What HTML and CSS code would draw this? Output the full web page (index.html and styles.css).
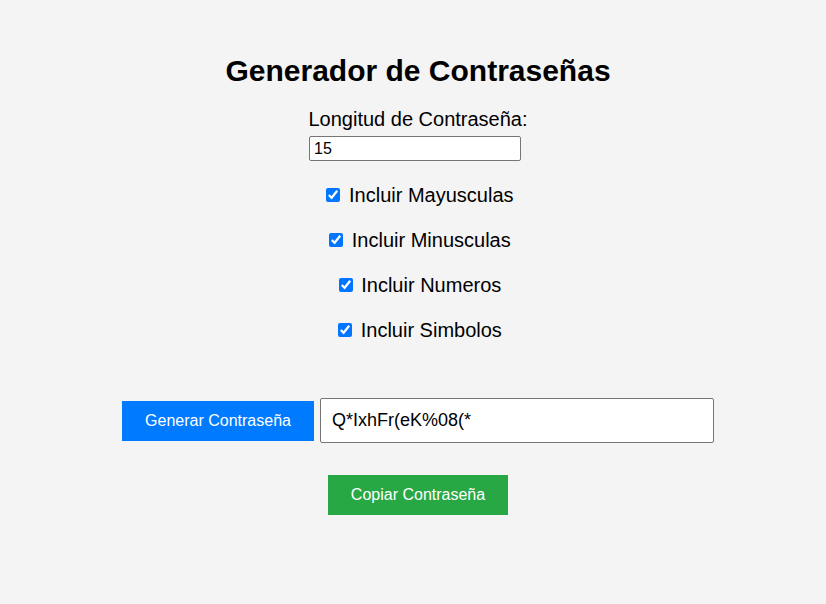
FILE: index.html
```html
<!DOCTYPE html>
<html lang="es">
<head>
<meta charset="utf-8">
<title>Generador de Contraseñas</title>
<link rel="stylesheet" href="styles.css">
</head>
<body>
<main class="app">
  <h1 class="title">Generador de Contraseñas</h1>
  <label class="length-label" for="length">Longitud de Contraseña:</label>
  <input class="length-input" id="length" type="number" value="15">
  <div class="options">
    <label class="option"><input type="checkbox" checked> Incluir Mayusculas</label>
    <label class="option"><input type="checkbox" checked> Incluir Minusculas</label>
    <label class="option"><input type="checkbox" checked> Incluir Numeros</label>
    <label class="option"><input type="checkbox" checked> Incluir Simbolos</label>
  </div>
  <div class="generate-row">
    <button class="btn btn-blue" type="button">Generar Contraseña</button>
    <input class="password" type="text" value="Q*IxhFr(eK%08(*" readonly>
  </div>
  <button class="btn btn-green" type="button">Copiar Contraseña</button>
</main>
</body>
</html>
```
FILE: styles.css
```css
html, body {
  margin: 0;
  padding: 0;
  background: #f4f4f4;
}
body {
  font-family: "Liberation Sans", Arial, sans-serif;
  color: #000;
}
.app {
  display: flex;
  flex-direction: column;
  align-items: center;
  margin-left: 10px;
  padding-top: 54px;
}
.title {
  margin: 0;
  font-size: 30px;
  line-height: 34px;
  font-weight: bold;
}
.length-label {
  margin-top: 20px;
  font-size: 20px;
  line-height: 23px;
}
.length-input {
  box-sizing: border-box;
  margin: 5px 6px 0 0;
  width: 212px;
  height: 25px;
  padding: 0 4px;
  border: 1px solid #767676;
  border-radius: 2px;
  background: #fff;
  font-family: "Liberation Sans", Arial, sans-serif;
  font-size: 16px;
  color: #000;
  -moz-appearance: textfield;
}
.length-input::-webkit-inner-spin-button,
.length-input::-webkit-outer-spin-button {
  -webkit-appearance: none;
  margin: 0;
}
.options {
  display: flex;
  flex-direction: column;
  align-items: center;
  gap: 22px;
  margin-top: 23px;
}
.option {
  font-size: 20px;
  line-height: 23px;
  height: 23px;
}
.option input {
  width: 14px;
  height: 14px;
  margin: 3px 3px 3px 4px;
  accent-color: #0075ff;
  vertical-align: baseline;
}
.generate-row {
  display: flex;
  align-items: center;
  gap: 6px;
  margin-top: 56px;
}
.btn {
  box-sizing: border-box;
  height: 40px;
  border: none;
  border-radius: 0;
  color: #fff;
  font-family: "Liberation Sans", Arial, sans-serif;
  font-size: 16px;
  padding: 0;
  cursor: pointer;
}
.btn-blue {
  width: 192px;
  background: #007bff;
}
.btn-green {
  width: 180px;
  margin-top: 32px;
  background: #28a745;
}
.password {
  box-sizing: border-box;
  width: 394px;
  height: 45px;
  padding: 0 11px;
  border: 1px solid #767676;
  border-radius: 2px;
  background: #fff;
  font-family: "Liberation Sans", Arial, sans-serif;
  font-size: 18px;
  color: #000;
}
```
